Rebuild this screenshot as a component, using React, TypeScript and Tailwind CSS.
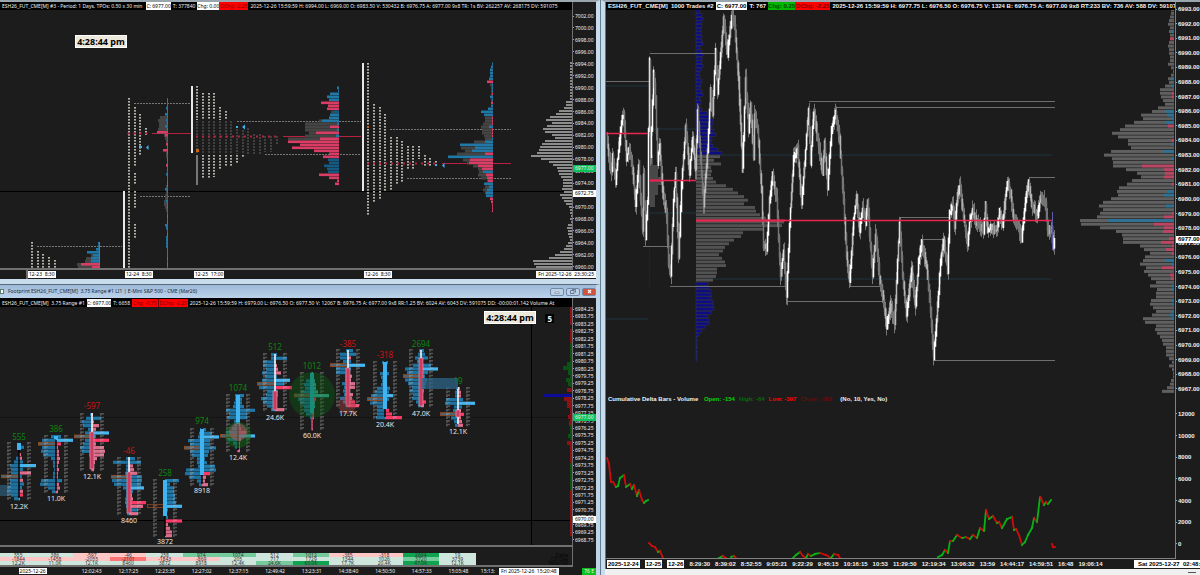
import type { ReactNode } from 'react';

type Row = [gray: number, len: number, color: string];

const BLUE = '#1f78a5';
const PINK = '#d93d66';

const FILL: Record<string, string> = {
  b: '#1f78a8',
  B: '#45b6f2',
  p: '#dc6c8a',
  h: '#ff3868',
  t: '#35b5b0',
};

// small deterministic generator so the bars look the same on every render
function makeRandom(seed: number) {
  let s = seed;
  return () => {
    s = (s * 16807) % 2147483647;
    return s / 2147483647;
  };
}

/* ---------- TPO chart ---------- */

const TPO_COLUMNS: [x: number, y1: number, y2: number][] = [
  [32, 242, 268], [38, 251, 268], [43, 254, 268], [49, 257, 268], [55, 260, 268],
  [129, 98, 268], [135, 107, 167], [135, 173, 185], [135, 191, 209], [135, 224, 239], [140, 114, 155], [146, 128, 135],
  [197, 86, 120], [203, 93, 120], [209, 93, 120], [214, 93, 120], [220, 107, 120], [226, 111, 120],
  [203, 155, 179], [209, 155, 179], [214, 155, 177], [220, 155, 170], [226, 155, 167], [231, 155, 167], [237, 155, 164], [243, 155, 158],
  [368, 63, 215], [374, 104, 203], [380, 107, 200], [385, 114, 191], [391, 137, 191], [397, 137, 185], [402, 141, 182],
  [408, 146, 170], [413, 146, 170], [419, 146, 159], [425, 155, 167], [430, 158, 167], [436, 161, 167],
];

const TPO_DIM: [x: number, y1: number, y2: number][] = [
  [197, 121, 154], [203, 121, 154], [209, 121, 154], [214, 121, 154], [220, 121, 154], [226, 121, 154], [231, 121, 154],
  [237, 126, 154], [243, 130, 154], [248, 128, 154], [254, 134, 154], [260, 134, 154], [265, 136, 152], [271, 136, 152], [277, 136, 144],
];

const DOTTED: [x1: number, x2: number, y: number][] = [
  [37, 122, 246], [134, 191, 103], [140, 191, 196], [237, 361, 121], [265, 361, 154], [390, 511, 129], [407, 511, 178],
];

const PROFILE_23: Row[] = [
  [0, 1, BLUE], [0, 1, BLUE], [0, 3, BLUE], [0, 12, BLUE], [8, 6, BLUE], [13, 8, BLUE], [14, 8, BLUE], [22, 18, PINK], [21, 7, PINK],
];

const PROFILE_24: Row[] = [
  [0, 1, BLUE], [0, 1, BLUE], [0, 1, BLUE], [0, 2, BLUE], [0, 1, BLUE], [0, 3, BLUE], [8, 1, BLUE], [10, 2, BLUE], [9, 1, PINK],
  [9, 3, BLUE], [10, 1, PINK], [10, 11, PINK], [4, 3, PINK], [3, 1, BLUE], [2, 1, BLUE], [0, 2, PINK], [0, 1, BLUE], [0, 5, PINK],
  [2, 1, PINK], [2, 1, BLUE], [0, 1, PINK], [0, 1, BLUE], [0, 2, PINK], [0, 1, BLUE], [0, 1, BLUE], [0, 2, BLUE], [0, 1, BLUE],
  [0, 1, BLUE], [0, 1, PINK], [2, 1, PINK], [0, 3, BLUE], [2, 1, BLUE], [3, 1, BLUE], [3, 1, BLUE], [4, 2, BLUE], [4, 1, PINK],
  [3, 1, PINK], [2, 1, BLUE], [0, 1, BLUE], [0, 1, PINK], [0, 1, BLUE], [0, 1, PINK], [0, 3, BLUE], [0, 2, BLUE], [0, 1, BLUE],
  [0, 1, PINK], [0, 2, BLUE], [0, 2, BLUE], [0, 2, BLUE], [0, 2, BLUE], [0, 1, BLUE], [0, 1, BLUE], [0, 1, BLUE], [0, 1, PINK],
  [0, 1, BLUE], [0, 1, PINK], [0, 1, BLUE],
];

const PROFILE_25: Row[] = [
  [0, 2, BLUE], [0, 1, BLUE], [0, 9, BLUE], [0, 12, BLUE], [0, 10, BLUE], [0, 18, PINK], [0, 11, PINK], [0, 12, PINK], [8, 5, '#155a82'],
  [0, 9, BLUE], [0, 10, BLUE], [20, 17, BLUE], [34, 2, BLUE], [34, 9, PINK], [34, 2, BLUE], [30, 23, PINK], [34, 3, BLUE],
  [51, 19, PINK], [0, 51, PINK], [0, 39, PINK], [0, 47, PINK], [0, 25, PINK], [0, 10, PINK], [0, 16, PINK], [0, 11, '#155a82'],
  [0, 10, '#155a82'], [0, 15, '#155a82'], [0, 12, '#155a82'], [0, 11, '#155a82'], [0, 20, PINK], [0, 10, PINK], [0, 2, PINK], [0, 4, PINK],
];

const PROFILE_26: Row[] = [
  [0, 1, BLUE], [0, 2, BLUE], [0, 3, BLUE], [0, 3, BLUE], [0, 3, BLUE], [0, 4, BLUE], [0, 6, PINK], [3, 1, BLUE], [2, 1, BLUE],
  [2, 1, BLUE], [2, 1, PINK], [0, 3, BLUE], [2, 1, BLUE], [0, 2, PINK], [0, 2, BLUE], [0, 5, BLUE], [0, 12, BLUE], [0, 9, BLUE],
  [8, 1, PINK], [8, 1, PINK], [10, 1, PINK], [12, 4, BLUE], [11, 1, PINK], [11, 1, PINK], [9, 1, PINK], [8, 1, BLUE], [19, 8, BLUE],
  [0, 33, BLUE], [32, 18, BLUE], [28, 21, BLUE], [36, 8, PINK], [0, 45, BLUE], [30, 23, PINK], [26, 24, PINK], [20, 15, PINK],
  [15, 11, PINK], [14, 10, BLUE], [15, 7, PINK], [12, 6, PINK], [6, 5, PINK], [0, 9, BLUE], [8, 4, BLUE], [10, 6, BLUE], [8, 7, BLUE],
  [0, 7, BLUE], [0, 3, PINK], [0, 2, PINK], [0, 1, PINK], [0, 1, PINK], [0, 1, PINK],
];

const COMPOSITE = [
  2, 2, 2, 2, 2, 2, 2, 2, 2, 2, 2, 2, 2, 6, 6, 8, 13, 16, 22, 26, 20, 25, 29, 27, 20, 17, 27, 30, 32, 33, 35, 41, 31, 23, 19, 15, 14, 13,
  11, 9, 9, 9, 10, 8, 12, 10, 8, 6, 3, 2, 2, 1, 2, 1, 4, 5, 4, 4, 3, 2, 4, 6, 8, 12, 17, 23, 39, 38, 36,
];

/* ---------- Footprint chart ---------- */

interface Footprint {
  c: number;
  top: number;
  l: number[];
  r: number[];
  colors: string;
  poc: number;
  wick: [number, number, string];
  body: [number, number, string];
  delta: string;
  deltaY: number;
  cumulative: string;
  volume: string;
  volumeY: number;
  tints: [string, string, string];
}

const UP = '#3fb4f0';
const DOWN = '#cf3a60';
const G1 = 'bg-[#cfe6dc]';
const G2 = 'bg-[#74cb9c]';
const G3 = 'bg-[#0fa550]';
const R1 = 'bg-[#ffc6c6]';
const R2 = 'bg-[#ff7474]';

const FOOTPRINTS: Footprint[] = [
  { c: 19, top: 442, l: [0, 0, 0, 0, 3, 5, 9, 8, 8, 0, 9, 9, 11, 12, 8, 5], r: [0, 5, 0, 2, 3, 4, 17, 4, 12, 3, 4, 5, 3, 4, 4, 1], colors: 'bbbppbBbpbpbbphp', poc: 9, wick: [450, 498, '#050505'], body: [443, 450, UP], delta: '555', deltaY: 440, cumulative: '-1844', volume: '12.2K', volumeY: 509, tints: [G1, R1, G1] },
  { c: 56, top: 435, l: [5, 14, 0, 14, 15, 13, 5, 3, 3, 2, 3, 3, 15, 16, 8, 4], r: [5, 17, 5, 2, 3, 3, 4, 3, 2, 3, 2, 2, 6, 3, 4, 2], colors: 'bBhpppppppppbppp', poc: 2, wick: [440, 491, '#050505'], body: [436, 439, UP], delta: '386', deltaY: 432, cumulative: '-1458', volume: '11.0K', volumeY: 501, tints: [G1, R1, G1] },
  { c: 92, top: 413, l: [2, 6, 10, 9, 4, 7, 0, 7, 9, 12, 10, 3, 2, 2, 2, 1], r: [1, 9, 2, 7, 4, 17, 4, 17, 4, 12, 13, 12, 5, 3, 2, 2], colors: 'pbpppBbhpppppppp', poc: 6, wick: [413, 432, '#fff'], body: [432, 469, DOWN], delta: '-597', deltaY: 409, cumulative: '-2055', volume: '12.1K', volumeY: 479, tints: [R1, R1, G1] },
  { c: 129, top: 457, l: [3, 16, 3, 3, 4, 0, 17, 15, 6, 3, 3, 4, 4, 3, 2, 2], r: [6, 12, 4, 5, 8, 13, 13, 12, 15, 4, 3, 4, 17, 14, 9, 9], colors: 'bbpppbbbBbpphpbp', poc: 5, wick: [457, 472, '#fff'], body: [472, 513, DOWN], delta: '-46', deltaY: 454, cumulative: '-2101', volume: '8460', volumeY: 523, tints: [R1, R2, G1] },
  { c: 165, top: 479, l: [0, 0, 0, 0, 0, 0, 0, 0, 0, 0, 0, 0, 0, 0, 0, 0], r: [14, 5, 9, 9, 10, 10, 11, 17, 3, 2, 3, 17, 3, 5, 7, 7], colors: 'bbbbbbbBbbbhpppp', poc: 7, wick: [516, 536, '#050505'], body: [480, 516, UP], delta: '258', deltaY: 476, cumulative: '-1843', volume: '3872', volumeY: 544, tints: [G1, R1, G1] },
  { c: 202, top: 428, l: [2, 3, 4, 14, 12, 0, 12, 10, 5, 5, 4, 16, 17, 13, 5, 3], r: [4, 10, 17, 8, 8, 14, 7, 6, 3, 5, 13, 14, 8, 4, 3, 6], colors: 'bbBbbbbbbbbbhppp', poc: 5, wick: [428, 484, '#050505'], body: [429, 475, UP], delta: '974', deltaY: 424, cumulative: '-869', volume: '8918', volumeY: 493, tints: [G2, R1, G1] },
  { c: 238, top: 394, l: [3, 3, 4, 5, 12, 9, 11, 4, 4, 6, 12, 0, 10, 5, 3, 1], r: [6, 4, 4, 6, 17, 9, 9, 2, 2, 3, 8, 17, 3, 2, 2, 2], colors: 'bbbbbbbpphhBpppp', poc: 11, wick: [424, 450, '#050505'], body: [395, 424, UP], delta: '1074', deltaY: 391, cumulative: '205', volume: '12.4K', volumeY: 460, tints: [G2, G1, G1] },
  { c: 275, top: 353, l: [4, 4, 12, 12, 9, 13, 10, 13, 0, 16, 8, 9, 14, 12, 8, 4], r: [2, 12, 1, 2, 3, 6, 2, 15, 9, 17, 3, 3, 2, 1, 2, 9], colors: 'bbbpppbBbhbbpppp', poc: 8, wick: [354, 391, '#fff'], body: [391, 410, DOWN], delta: '512', deltaY: 350, cumulative: '717', volume: '24.6K', volumeY: 420, tints: [G1, G1, G2] },
  { c: 312, top: 372, l: [1, 2, 6, 8, 7, 11, 0, 14, 12, 8, 8, 6, 2, 1, 1, 1], r: [1, 2, 3, 4, 4, 6, 17, 4, 3, 3, 2, 2, 2, 1, 1, 1], colors: 'ttttttthttttpppp', poc: 6, wick: [413, 429, '#b23a5a'], body: [373, 413, '#25b3cf'], delta: '1012', deltaY: 369, cumulative: '1729', volume: '60.0K', volumeY: 438, tints: [G2, G1, G3] },
  { c: 348, top: 349, l: [2, 8, 8, 5, 0, 12, 12, 3, 3, 6, 4, 5, 4, 8, 5, 2], r: [5, 8, 3, 3, 17, 3, 2, 4, 3, 7, 7, 2, 5, 4, 7, 11], colors: 'bbpbBbpppppppphh', poc: 4, wick: [350, 368, '#fff'], body: [368, 406, DOWN], delta: '-385', deltaY: 347, cumulative: '1344', volume: '17.7K', volumeY: 416, tints: [R1, G1, G1] },
  { c: 385, top: 361, l: [3, 2, 2, 5, 4, 3, 4, 8, 10, 14, 0, 15, 8, 8, 8, 9], r: [3, 2, 2, 4, 2, 2, 2, 5, 4, 8, 4, 2, 2, 4, 7, 17], colors: 'bbbbbbbbbBbpphhh', poc: 10, wick: [361, 417, '#050505'], body: [362, 409, UP], delta: '-318', deltaY: 358, cumulative: '1026', volume: '20.4K', volumeY: 427, tints: [R1, G1, G1] },
  { c: 421, top: 349, l: [2, 3, 6, 4, 8, 16, 14, 0, 16, 13, 9, 11, 8, 9, 5, 3], r: [3, 4, 7, 2, 10, 17, 7, 4, 6, 5, 4, 3, 2, 2, 5, 3], colors: 'bbbbbBbbbbbbpphp', poc: 7, wick: [350, 358, '#fff'], body: [358, 406, DOWN], delta: '2694', deltaY: 347, cumulative: '3720', volume: '47.0K', volumeY: 416, tints: [G3, G2, G3] },
  { c: 458, top: 387, l: [2, 3, 3, 12, 13, 4, 5, 0, 7, 4, 3], r: [2, 3, 3, 5, 17, 4, 3, 6, 3, 4, 5], colors: 'pppbBbphppp', poc: 7, wick: [387, 424, '#fff'], body: [410, 417, DOWN], delta: '19', deltaY: 384, cumulative: '3739', volume: '12.1K', volumeY: 434, tints: [G1, G1, G1] },
];

const FOOTPRINT_TIMES = ['12:02:43', '12:17:25', '12:23:35', '12:27:02', '12:37:15', '12:49:42', '13:23:31', '14:38:40', '14:50:50', '14:57:33', '15:05:48'];

/* ---------- 1000 trades chart ---------- */

const PRICE: [number, number][] = [
  [607, 135], [609, 155], [612, 172], [613, 155], [616, 180], [619, 150], [622, 122], [624, 116], [627, 158], [629, 150], [631, 155], [633, 170],
  [636, 205], [639, 165], [643, 228], [644, 175], [646, 236], [648, 200], [650, 62], [651, 158], [654, 74], [656, 100], [658, 162], [660, 145],
  [663, 190], [667, 215], [669, 262], [671, 275], [674, 200], [676, 175], [679, 256], [682, 185], [686, 128], [690, 172], [693, 138], [696, 170],
  [698, 112], [701, 160], [704, 204], [708, 150], [711, 90], [713, 114], [716, 52], [718, 90], [724, 20], [728, 54], [732, 16], [735, 24],
  [739, 80], [743, 168], [746, 78], [749, 130], [751, 105], [754, 156], [755, 114], [758, 130], [762, 190], [764, 246], [767, 250], [770, 200],
  [773, 176], [777, 198], [781, 276], [784, 250], [787, 297], [790, 225], [794, 158], [798, 149], [802, 204], [806, 150], [809, 110], [811, 162],
  [814, 112], [818, 138], [823, 172], [825, 144], [828, 186], [832, 130], [836, 113], [840, 140], [844, 200], [847, 255], [850, 282], [854, 220],
  [857, 198], [860, 230], [863, 208], [866, 222], [868, 203], [873, 276], [876, 234], [880, 278], [884, 300], [887, 326], [891, 305], [895, 324],
  [898, 260], [900, 224], [903, 275], [907, 315], [912, 270], [916, 306], [919, 262], [922, 244], [927, 265], [931, 310], [934, 356], [937, 320],
  [941, 262], [944, 240], [948, 270], [950, 214], [953, 206], [955, 226], [958, 195], [960, 186], [964, 215], [968, 246], [970, 222], [973, 210],
  [977, 222], [984, 230], [986, 206], [988, 230], [991, 228], [997, 230], [1000, 212], [1003, 224], [1006, 196], [1008, 182], [1011, 194],
  [1014, 218], [1018, 224], [1022, 238], [1026, 200], [1029, 184], [1032, 204], [1038, 216], [1041, 196], [1044, 200], [1046, 206], [1048, 230],
  [1052, 230], [1054, 248], [1055, 238],
];

const LEVELS: [x1: number, x2: number, y: number][] = [
  [606, 650, 81], [650, 717, 53], [643, 670, 246], [670, 787, 286], [787, 883, 301], [809, 1055, 101], [836, 1055, 107],
  [850, 880, 286], [900, 950, 217], [922, 944, 239], [1029, 1055, 177], [935, 1055, 360],
];

const VOLUME_PROFILE = [
  4, 6, 7, 6, 6, 5, 5, 6, 6, 7, 4, 6, 7, 6, 6, 7, 5, 3, 4, 6, 5, 4, 6, 7, 4, 5, 4, 6, 11, 14, 17, 17, 16, 18, 20, 16, 15, 17, 22, 26,
  24, 18, 25, 15, 16, 15, 17, 20, 30, 37, 42, 48, 52, 48, 59, 60, 64, 70, 88, 86, 67, 47, 45, 38, 33, 29, 27, 23, 26, 29, 30, 21, 21, 20, 17,
  12, 13, 15, 15, 15, 17, 17, 18, 15, 12, 13, 13, 9, 6, 3, 1, 1, 1, 1, 1, 1, 1,
];

const DEPTH = [
  3, 3, 4, 5, 6, 4, 5, 4, 4, 5, 6, 5, 5, 4, 4, 6, 3, 1, 3, 6, 5, 9, 14, 14, 13, 11, 9, 16, 22, 33, 31, 40, 49, 54, 62, 56, 46, 46, 43, 63,
  70, 62, 61, 61, 48, 37, 33, 42, 47, 55, 57, 56, 63, 71, 75, 71, 74, 77, 94, 93, 74, 58, 52, 51, 51, 34, 30, 24, 29, 31, 34, 28, 30, 26, 23,
  18, 24, 17, 18, 18, 23, 24, 21, 18, 22, 31, 29, 18, 19, 17, 14, 12, 11, 8, 8, 8, 5, 2, 5, 2, 1, 1, 3, 4, 7, 12,
];

// row index -> coloured part at the axis side
const DEPTH_MARKS: Record<number, [number, string]> = {
  6: [3, BLUE], 8: [4, PINK], 19: [3, BLUE], 21: [2, BLUE], 23: [2, PINK], 24: [2, PINK], 28: [9, BLUE], 29: [7, BLUE], 30: [2, BLUE],
  31: [8, BLUE], 32: [6, PINK], 36: [2, PINK], 37: [3, BLUE], 39: [11, BLUE], 41: [2, BLUE], 43: [32, PINK], 44: [10, PINK], 45: [9, PINK],
  46: [10, PINK], 48: [2, PINK], 50: [6, BLUE], 51: [10, BLUE], 54: [8, BLUE], 56: [2, PINK], 57: [10, PINK], 58: [67, BLUE], 59: [20, PINK],
  60: [10, PINK], 61: [11, PINK], 63: [5, PINK], 64: [13, PINK], 65: [2, PINK], 66: [8, PINK], 67: [2, PINK], 69: [9, BLUE], 70: [2, BLUE],
  71: [12, PINK], 73: [4, PINK], 74: [3, PINK], 76: [2, BLUE], 77: [3, BLUE], 80: [2, BLUE], 81: [2, BLUE], 83: [2, BLUE], 84: [4, BLUE], 85: [2, BLUE],
};

const DELTA_RUNS: [number, number][][] = [
  [[607, 458], [609, 464], [611, 482], [613, 482], [616, 487], [618, 486], [620, 478], [624, 475], [626, 487], [630, 484], [632, 489], [634, 485], [637, 496], [639, 490], [642, 500], [644, 503], [646, 501], [648, 500]],
  [[649, 543], [652, 546], [655, 547], [658, 552], [660, 551], [663, 558]],
  [[719, 558], [723, 556], [726, 558]],
  [[731, 557], [734, 556], [736, 558]],
  [[793, 558], [796, 555], [800, 552], [803, 556], [806, 558], [808, 554], [811, 556], [815, 554], [820, 553], [826, 555], [831, 558], [834, 554], [838, 555], [840, 558]],
  [[938, 557], [942, 555], [945, 550], [948, 553], [950, 541], [953, 541], [957, 535], [962, 538], [966, 537], [970, 539], [973, 535], [977, 538], [980, 528], [984, 531], [986, 510], [989, 519], [993, 516], [997, 523], [999, 522], [1002, 528], [1007, 519], [1012, 517], [1014, 530], [1016, 529], [1019, 535], [1022, 545], [1025, 542], [1028, 535], [1032, 528], [1034, 518], [1037, 522], [1040, 497], [1041, 498], [1044, 505], [1046, 502], [1048, 504], [1051, 500]],
  [[1052, 544], [1053, 547], [1055, 547]],
];

const TRADE_TIMES = ['8:29:30', '8:39:02', '8:52:55', '9:05:21', '9:22:29', '9:45:15', '10:16:15', '10:53', '11:29:50', '12:19:34', '13:06:32', '13:59', '14:44:17', '14:59:51', '16:48', '19:06:14'];

function range(from: number, step: number, count: number) {
  return Array.from({ length: count }, (_, i) => (from - i * step).toFixed(2));
}

function Profile({ x, y, rows, pitch = 3 }: { x: number; y: number; rows: Row[]; pitch?: number }) {
  return (
    <g>
      {rows.map(([gray, len, color], i) => (
        <g key={i}>
          <rect x={x - gray} y={y + i * pitch} width={gray} height={pitch} fill="#444" />
          <rect x={x - len} y={y + i * pitch} width={len} height={pitch - 0.4} fill={color} />
        </g>
      ))}
    </g>
  );
}

function TpoPlot() {
  return (
    <svg viewBox="0 10 572 258" preserveAspectRatio="none" className="block h-full w-full">
      <line x1="0" x2="572" y1="191.5" y2="191.5" stroke="#000" />
      {DOTTED.map(([x1, x2, y]) => (
        <line key={`${x1}-${y}`} x1={x1} x2={x2} y1={y + 0.5} y2={y + 0.5} stroke="#777" strokeDasharray="2 1" />
      ))}
      {TPO_COLUMNS.map(([x, y1, y2]) => (
        <g key={`${x}-${y1}`}>
          <line x1={x} x2={x} y1={y1} y2={y2} stroke="#7c7c78" strokeWidth="2" strokeDasharray="2 1" />
          <line x1={x} x2={x} y1={y1} y2={y2} stroke="#d8d2c6" strokeWidth="1.200" strokeDasharray="1 2" />
        </g>
      ))}
      {TPO_DIM.map(([x, y1, y2]) => (
        <line key={x} x1={x} x2={x} y1={y1} y2={y2} stroke="#404040" strokeWidth="2" strokeDasharray="2 1" />
      ))}
      <line x1="197" x2="197" y1="155" y2="185" stroke="#777" strokeWidth="2" />
      <rect x="196" y="149" width="3" height="3" fill="#c8640e" />
      <rect x="367" y="126" width="2" height="2" fill="#c8640e" />
      <g fill="#e8e8e8">
        <rect x="123" y="191" width="2" height="78" />
        <rect x="191" y="86" width="2" height="67" />
        <rect x="362" y="63" width="2" height="128" />
      </g>
      {/* point of control */}
      <g stroke="#b8203f">
        <path d="M152 133.500H191M283 136.500H361M442 163.500H511" />
        <path d="M127.500 133.500H148" strokeWidth="2" strokeDasharray="2 4" />
        <path d="M196 136.500H280" strokeWidth="2" strokeDasharray="2 4" />
        <path d="M367 163.500H438" strokeWidth="2" strokeDasharray="2 4" />
      </g>
      <g fill="#3fb4f0">
        <path d="M146 147.500L148.500 145V150Z" />
        <path d="M242 127L245 124.500V129.500Z" />
        <path d="M442 165.500L444.500 163V168Z" />
        <rect x="236" y="126" width="2" height="2" />
        <rect x="139" y="146" width="3" height="2" />
        <rect x="435" y="164" width="2" height="2" />
      </g>
      <path d="M99.500 242V268M167.500 98V268" stroke="#6d757a" />
      <Profile x={99} y={242} rows={PROFILE_23} />
      <Profile x={168} y={98} rows={PROFILE_24} />
      <Profile x={339} y={86.5} rows={PROFILE_25} />
      <Profile x={493} y={62.5} rows={PROFILE_26} />
      {COMPOSITE.map((w, i) => (
        <rect key={i} x={572 - w} y={62 + i * 3} width={w} height="2" fill="#8c8c8c" />
      ))}
    </svg>
  );
}

function FootprintBar({ bar }: { bar: Footprint }) {
  const pitch = 3.67;
  const bottom = bar.top + bar.l.length * pitch;
  return (
    <g>
      {bar.l.map((w, i) => (
        <rect key={i} x={bar.c - w} y={bar.top + i * pitch} width={w} height="3.200" fill="#1f72a0" />
      ))}
      {bar.r.map((w, i) => (
        <rect key={i} x={bar.c} y={bar.top + i * pitch} width={w} height="3.200" fill={FILL[bar.colors[i]]} />
      ))}
      <rect x={bar.c - 17.5} y={bar.top + bar.poc * pitch} width="17" height="2.800" fill={bar.delta === '258' ? 'none' : '#46687a'} stroke="#9c4a1c" strokeWidth=".8" />
      {/* bid and ask sizes */}
      {[-11, -9, 9, 11].map((dx) => (
        <line key={dx} x1={bar.c + dx} x2={bar.c + dx} y1={bar.top} y2={bottom} stroke="#b5b5b5" strokeOpacity=".5" strokeWidth="1.400" strokeDasharray={dx === -9 || dx === 11 ? '1.6 2.07' : '2.6 1.07'} />
      ))}
      <line x1={bar.c} x2={bar.c} y1={bar.wick[0]} y2={bar.wick[1]} stroke={bar.wick[2]} strokeWidth="1.500" />
      <rect x={bar.c - 2} y={bar.body[0]} width="4" height={bar.body[1] - bar.body[0]} fill={bar.body[2]} stroke={bar.body[2] === DOWN ? '#e0a8b6' : 'none'} strokeWidth=".6" />
    </g>
  );
}

function FootprintPlot() {
  return (
    <svg viewBox="0 307 572 238" preserveAspectRatio="none" className="block h-full w-full overflow-visible">
      <path d="M0 520.500H572M531.500 307V545" stroke="#000" />
      <path d="M0 417.500H572" stroke="#0c0c0c" strokeDasharray="1 1" />
      <rect x="0" y="485" width="18" height="11" fill="#28495e" />
      {FOOTPRINTS.map((bar) => (
        <FootprintBar key={bar.c} bar={bar} />
      ))}
      <rect x="422" y="378" width="36" height="11" fill="#2c6486" fillOpacity=".75" />
      <circle cx="312" cy="395" r="23" fill="#0c5a12" fillOpacity=".45" />
      <circle cx="238" cy="435" r="13" fill="#0c6a14" fillOpacity=".5" />
      <circle cx="238" cy="432" r="9" fill="#c86080" fillOpacity=".45" />
      <circle cx="347" cy="405" r="9" fill="#b04a50" fillOpacity=".4" />
      {FOOTPRINTS.map((bar) => (
        <g key={bar.c} textAnchor="middle">
          <text x={bar.c} y={bar.deltaY} fontSize="8" fill={bar.delta.startsWith('-') ? '#c81414' : '#0c8410'}>{bar.delta}</text>
          <text x={bar.c} y={bar.volumeY} fontSize="7" fill="#e6e6e6">{bar.volume}</text>
        </g>
      ))}
      <g fill="#8c1216">
        <path d="M570 307h2v18h-2zM570 329h2v14h-2zM570 490h2v46h-2zM570 400h2v24h-2z" />
        <path d="M567 388h5v4h-5zM564 397h8v4h-8zM567 401h5v7h-5zM568 415h4v4h-4zM569 421h3v5h-3zM567 441h5v4h-5zM570 445h2v18h-2z" />
      </g>
      <g fill="#0c5216">
        <path d="M570 343h2v44h-2zM570 425h2v15h-2zM570 463h2v27h-2z" />
        <path d="M567 362h5v4h-5zM563 366h9v4h-9zM568 370h4v5h-4zM566 378h6v4h-6zM568 382h4v4h-4zM568 434h4v4h-4z" />
      </g>
      <rect x="544" y="394" width="28" height="3" fill="#0c0c96" />
    </svg>
  );
}

function PriceBars() {
  const rnd = makeRandom(77);
  const bars: ReactNode[] = [];
  for (let i = 1; i < PRICE.length; i++) {
    const [x0, y0] = PRICE[i - 1];
    const [x1, y1] = PRICE[i];
    const steps = Math.max(1, Math.round(x1 - x0));
    for (let s = 0; s < steps; s++) {
      const a = y0 + ((y1 - y0) * s) / steps;
      const b = y0 + ((y1 - y0) * (s + 1)) / steps;
      const x = x0 + ((x1 - x0) * (s + 0.5)) / steps;
      const up = b < a;
      const lo = Math.min(a, b);
      const hi = Math.max(a, b);
      bars.push(
        <g key={`${i}-${s}`}>
          <line x1={x} x2={x} y1={lo - 3 - rnd() * 7} y2={hi + 3 + rnd() * 7} stroke="#808080" strokeWidth=".9" />
          <line x1={x} x2={x} y1={lo - rnd() * 5} y2={hi + rnd() * 5} stroke={up ? (rnd() > 0.3 ? '#fff' : '#bbb') : rnd() > 0.7 ? '#b4b4b4' : '#757575'} strokeWidth="1.500" />
        </g>,
      );
    }
  }
  return <g>{bars}</g>;
}

function TradesPlot() {
  return (
    <svg viewBox="606 10 569 548" preserveAspectRatio="none" className="block h-full w-full">
      <path d="M606 86H648M650 129H696M650 213H696M696 155H1052M696 279H1052M606 319H648" stroke="#1c3440" />
      {VOLUME_PROFILE.map((w, i) => {
        const blue = i < 40 || i > 74;
        return (
          <rect key={i} x="696" y={10 + i * 3.63} width={w} height="2.900" fill={blue ? '#0c0c86' : '#525252'} stroke={blue ? '#3c3c50' : 'none'} strokeWidth=".4" />
        );
      })}
      <path d="M649.500 50V288" stroke="#1a1a7c" strokeDasharray="2 1" />
      <path d="M650 155h3v10h5v12h4v8h-4v10h-3v12h-5z" fill="#484848" />
      <g stroke="#6e6e6e">
        {LEVELS.map(([x1, x2, y]) => (
          <line key={`${x1}-${y}`} x1={x1} x2={x2} y1={y + 0.5} y2={y + 0.5} />
        ))}
      </g>
      <PriceBars />
      <path d="M606 133.500H648M650 180.500H696M696 220.500H1052" stroke="#e8244f" strokeWidth="1.300" />
      <path d="M650 180.500H661M696 220.500H785" stroke="#e8244f" strokeWidth="2" />
      <path d="M1052.500 212V250" stroke="#5c5ca8" />
      {DEPTH.map((w, i) => {
        const mark = DEPTH_MARKS[i];
        return (
          <g key={i}>
            <rect x={1174 - w} y={10 + i * 3.635 - 1.8} width={w} height="3" fill="#606060" />
            {mark && <rect x={1174 - mark[0]} y={10 + i * 3.635 - 1.8} width={mark[0]} height="3" fill={mark[1]} fillOpacity=".75" />}
          </g>
        );
      })}
      {DELTA_RUNS.map((run) =>
        run.slice(1).map(([x, y], i) => {
          const [px, py] = run[i];
          return <line key={`${px}-${py}`} x1={px} y1={py} x2={x} y2={y} stroke={y < py ? '#08b414' : '#d00c0c'} strokeWidth="1.800" strokeLinecap="square" />;
        }),
      )}
    </svg>
  );
}

function Clock() {
  return (
    <time className="border border-white bg-[#ece9dc] text-center font-['Noto_Sans',sans-serif] text-[9px] leading-[11px] font-bold whitespace-nowrap text-black">
      4:28:44 pm
    </time>
  );
}

function AxisLabels({ labels, className }: { labels: string[]; className: string }) {
  return (
    <ol className={`flex flex-col justify-between ${className}`}>
      {labels.map((label) => (
        <li key={label} className="flex items-center leading-[6px]">
          <i className="mr-px h-px w-px bg-neutral-400" />
          {label}
        </li>
      ))}
    </ol>
  );
}

function TpoWindow() {
  return (
    <section className="flex min-h-0 min-w-0 flex-col border-t-2 border-r-4 border-b-[5px] border-[#c9dcee] border-t-[#9aa6ad] bg-[#1c1c1c]">
      <div className="flex min-h-0 flex-1">
        <div className="flex min-w-0 flex-1 flex-col border-r border-b-2 border-[#707070]">
          <header className="flex h-2 shrink-0 items-center gap-0.5 overflow-hidden bg-black pl-0.5 leading-[8px] whitespace-pre">
            <span className="pr-0.5">ESH26_FUT_CME[M] #3 - Period: 1 Days, TPOs: 0.50 x 30 min</span>
            <span className="bg-white text-black">C: 6977.00</span>
            <span>T: 377840</span>
            <span className="flex">
              <span className="bg-white text-black">Chg: 0.00</span>
              <span className="bg-[#f00] px-px text-[#700]">DChg: -2.25</span>
            </span>
            <span>2025-12-26 15:59:59 H: 6994.00 L: 6969.00 O: 6983.50 V: 530432 B: 6976.75 A: 6977.00 9x8 TR: 1s BV: 262257 AV: 268175 DV: 591075</span>
          </header>
          <div className="relative min-h-0 flex-1">
            <TpoPlot />
            <div className="absolute top-[25px] left-[75px] flex w-[52px] flex-col">
              <Clock />
            </div>
          </div>
        </div>
        <div className="relative w-[23px] shrink-0">
          <AxisLabels labels={range(7002, 2, 22)} className="h-full pt-[11px]" />
          <span className="absolute top-[61%] left-0 w-full bg-[#0cc05a] pl-0.5 leading-[7px]">6977.00</span>
          <span className="absolute top-[70%] left-0 w-full bg-white pl-0.5 leading-[7px] text-black">6972.75</span>
        </div>
      </div>
      <footer className="grid h-[9px] shrink-0 grid-cols-[28px_97px_69px_170px_1fr_auto] items-center leading-[7px] whitespace-pre text-black">
        <i className="h-full border-r-2 border-[#707070]" />
        <span className="justify-self-start bg-white px-px">12-23  8:30</span>
        <span className="justify-self-start bg-white px-px">12-24  8:30</span>
        <span className="justify-self-start bg-white px-px">12-25  17:00</span>
        <span className="justify-self-start bg-white px-px">12-26  8:30</span>
        <span className="bg-white px-0.5">Fri 2025-12-26  23:30:25</span>
      </footer>
    </section>
  );
}

const WINDOW_BUTTON = 'flex h-2 w-[14px] items-center justify-center rounded-[2px] border border-[#6f8aa8]';

function FootprintWindow() {
  return (
    <section className="flex min-h-0 min-w-0 flex-col border-t border-r-4 border-[#c0d5ea] border-t-[#5b6c7c] bg-[#1c1c1c]">
      <header className="flex h-[13px] shrink-0 items-center bg-linear-to-b from-[#9db9d8] to-[#bcd2ea] whitespace-pre text-[#1c2c40]">
        <i className="mr-1 h-[5px] w-1 border border-[#5d7d6d] bg-white" />
        <h2 className="flex-1">Footprint ESH26_FUT_CME[M]  3.75 Range #1 LI1 | E-Mini S&amp;P 500 - CME (Mar26)</h2>
        <div className="flex gap-0.5">
          <button aria-label="Minimize" className={`${WINDOW_BUTTON} bg-[#bcd0e6]`}>
            <svg width="6" height="4"><path d="M1 2h4v1.500H1z" fill="#fff" stroke="#55677c" strokeWidth=".5" /></svg>
          </button>
          <button aria-label="Restore" className={`${WINDOW_BUTTON} bg-[#bcd0e6]`}>
            <svg width="6" height="5"><path d="M.5 1.500h3.500v3H.5zM2 .5h3.500v3" fill="none" stroke="#55677c" strokeWidth=".8" /></svg>
          </button>
          <button aria-label="Close" className={`${WINDOW_BUTTON} bg-[#d2533c]`}>
            <svg width="5" height="5"><path d="M1 1l3 3M4 1L1 4" stroke="#fff" strokeWidth="1.200" /></svg>
          </button>
        </div>
      </header>
      <div className="flex min-h-0 flex-1">
        <div className="flex min-w-0 flex-1 flex-col border-r border-b-2 border-[#707070]">
          <header className="flex h-[9px] shrink-0 items-center gap-0.5 overflow-hidden bg-black pl-0.5 leading-[8px] whitespace-pre">
            <span>ESH26_FUT_CME[M]  3.75 Range #1</span>
            <span className="bg-white text-black">C: 6977.00</span>
            <span>T: 6658</span>
            <span className="flex bg-[#f00] text-[#700]">
              <span className="border-r border-[#700] px-px">Chg: -0.75</span>
              <span className="px-px">DChg: -2.25</span>
            </span>
            <span>2025-12-26 15:59:59 H: 6979.00 L: 6976.50 O: 6977.50 V: 12067 B: 6976.75 A: 6977.00 9x8 RR:1.25 BV: 6024 AV: 6043 DV: 591075 DD: -00:00:01.142 Volume At</span>
          </header>
          <div className="relative min-h-0 flex-1">
            <FootprintPlot />
            <div className="absolute top-1 right-[36px] flex w-[52px] flex-col">
              <Clock />
            </div>
            <b className="absolute top-[7px] right-[18px] bg-black px-0.5 text-[8px] leading-[9px]">5</b>
          </div>
          <div className="shrink-0 border-t-2 border-[#707070] pt-[6px]">
            <table className="w-full table-fixed border-collapse text-center leading-[4px] text-[#333]">
              <tbody>
                {(['delta', 'cumulative', 'volume'] as const).map((key, row) => (
                  <tr key={key}>
                    {FOOTPRINTS.map((bar) => (
                      <td key={bar.c} className={`w-[6.4%] p-0 ${bar.tints[row]}`}>{bar[key]}</td>
                    ))}
                    <th scope="row" className="p-0 pr-1 text-right font-normal text-[#050505]">{['Delta', 'CD Day', 'Total Vol'][row]}</th>
                  </tr>
                ))}
              </tbody>
            </table>
          </div>
        </div>
        <div className="relative w-[23px] shrink-0">
          <AxisLabels labels={range(6984.25, 0.5, 32)} className="h-[91%] pt-[8px]" />
          <span className="absolute top-[43%] left-0 w-full bg-[#0cc05a] pl-0.5 leading-[7px]">6977.00</span>
          <span className="absolute top-[81%] left-0 w-full bg-white pl-0.5 leading-[7px] text-black">6970.00</span>
        </div>
      </div>
      <footer className="flex h-[8px] shrink-0 items-center leading-[7px] whitespace-pre">
        <div className="grid w-[80%] grid-cols-13 text-center">
          <span className="col-span-2 pr-2"><span className="bg-white px-px text-black">2025-12-26</span></span>
          {FOOTPRINT_TIMES.map((t) => (
            <span key={t}>{t}</span>
          ))}
        </div>
        <span className="ml-1">15:13:</span>
        <span className="ml-1 bg-white px-0.5 text-black">Fri 2025-12-26  15:20:48</span>
        <span className="ml-auto bg-[#0cc020] px-0.5">76 E</span>
      </footer>
    </section>
  );
}

function TradesWindow() {
  return (
    <section className="flex min-h-0 min-w-0 flex-col border-t-2 border-l-4 border-[#c9dcee] border-t-[#9aa6ad] bg-[#1c1c1c] font-['Liberation_Sans',sans-serif] text-[6px] font-bold">
      <div className="flex min-h-0 flex-1 border-l border-[#707070]">
        <div className="flex min-w-0 flex-1 flex-col border-r border-b border-[#808080]">
          <header className="flex h-2 shrink-0 items-center gap-0.5 overflow-hidden bg-black pl-0.5 leading-[8px] whitespace-pre">
            <span>ESH26_FUT_CME[M]  1000 Trades #2</span>
            <span className="bg-white px-px text-black">C: 6977.00</span>
            <span>T: 767</span>
            <span className="flex">
              <span className="bg-[#00b800] text-[#040]">Chg: 0.25</span>
              <span className="bg-[#f00] px-px text-[#700]">DChg: -2.25</span>
            </span>
            <span>2025-12-26 15:59:59 H: 6977.75 L: 6976.50 O: 6976.75 V: 1324 B: 6976.75 A: 6977.00 9x8 RT:233 BV: 736 AV: 588 DV: 591075</span>
          </header>
          <div className="relative min-h-0 flex-1">
            <TradesPlot />
            <p className="absolute top-[385px] left-0.5 flex gap-1 leading-[8px] whitespace-pre">
              <span>Cumulative Delta Bars - Volume </span>
              <span className="text-[#00d800]">Open: -154</span>
              <span className="text-[#0a6a0a]">High: -64</span>
              <span className="text-[#f00]">Low: -307</span>
              <span className="text-[#6c0a0a]">Close: -302</span>
              <span className="ml-1">(No, 10, Yes, No)</span>
            </p>
          </div>
        </div>
        <div className="relative flex w-[24px] shrink-0 flex-col overflow-hidden">
          <AxisLabels labels={range(6993, 1, 27)} className="h-[70%] pt-1" />
          <AxisLabels labels={['12000', '10000', '8000', '6000', '4000', '2000', '0']} className="mt-[19px] h-[136px]" />
          <span className="absolute top-[42%] left-0 w-full bg-white pl-0.5 leading-[7px] text-black">6977.00</span>
        </div>
      </div>
      <footer className="flex h-[10px] shrink-0 items-center gap-[5px] overflow-hidden border-l border-[#707070] pl-px leading-[8px] whitespace-pre">
        <span className="bg-white px-px text-black">2025-12-24</span>
        <span className="bg-white px-px text-black">12-25</span>
        <span className="bg-white px-px text-black">12-26</span>
        {TRADE_TIMES.map((t) => (
          <span key={t}>{t}</span>
        ))}
        <span className="ml-auto w-[66px] overflow-hidden bg-white pl-1 text-black">Sat 2025-12-27  02:48:</span>
      </footer>
      <div className="flex h-[6px] shrink-0 items-center justify-end bg-[#f0f0f0] pr-1">
        <i className="h-px w-2 bg-[#555]" />
      </div>
    </section>
  );
}

export default function App() {
  return (
    <main className="grid h-screen w-full grid-cols-[601fr_599fr] overflow-hidden bg-[#5f7f8c] font-['Noto_Sans',sans-serif] text-[5px] text-[#f0f0f0]">
      <div className="grid min-h-0 min-w-0 grid-cols-1 grid-rows-[284fr_291fr] pr-px">
        <TpoWindow />
        <FootprintWindow />
      </div>
      <TradesWindow />
    </main>
  );
}
